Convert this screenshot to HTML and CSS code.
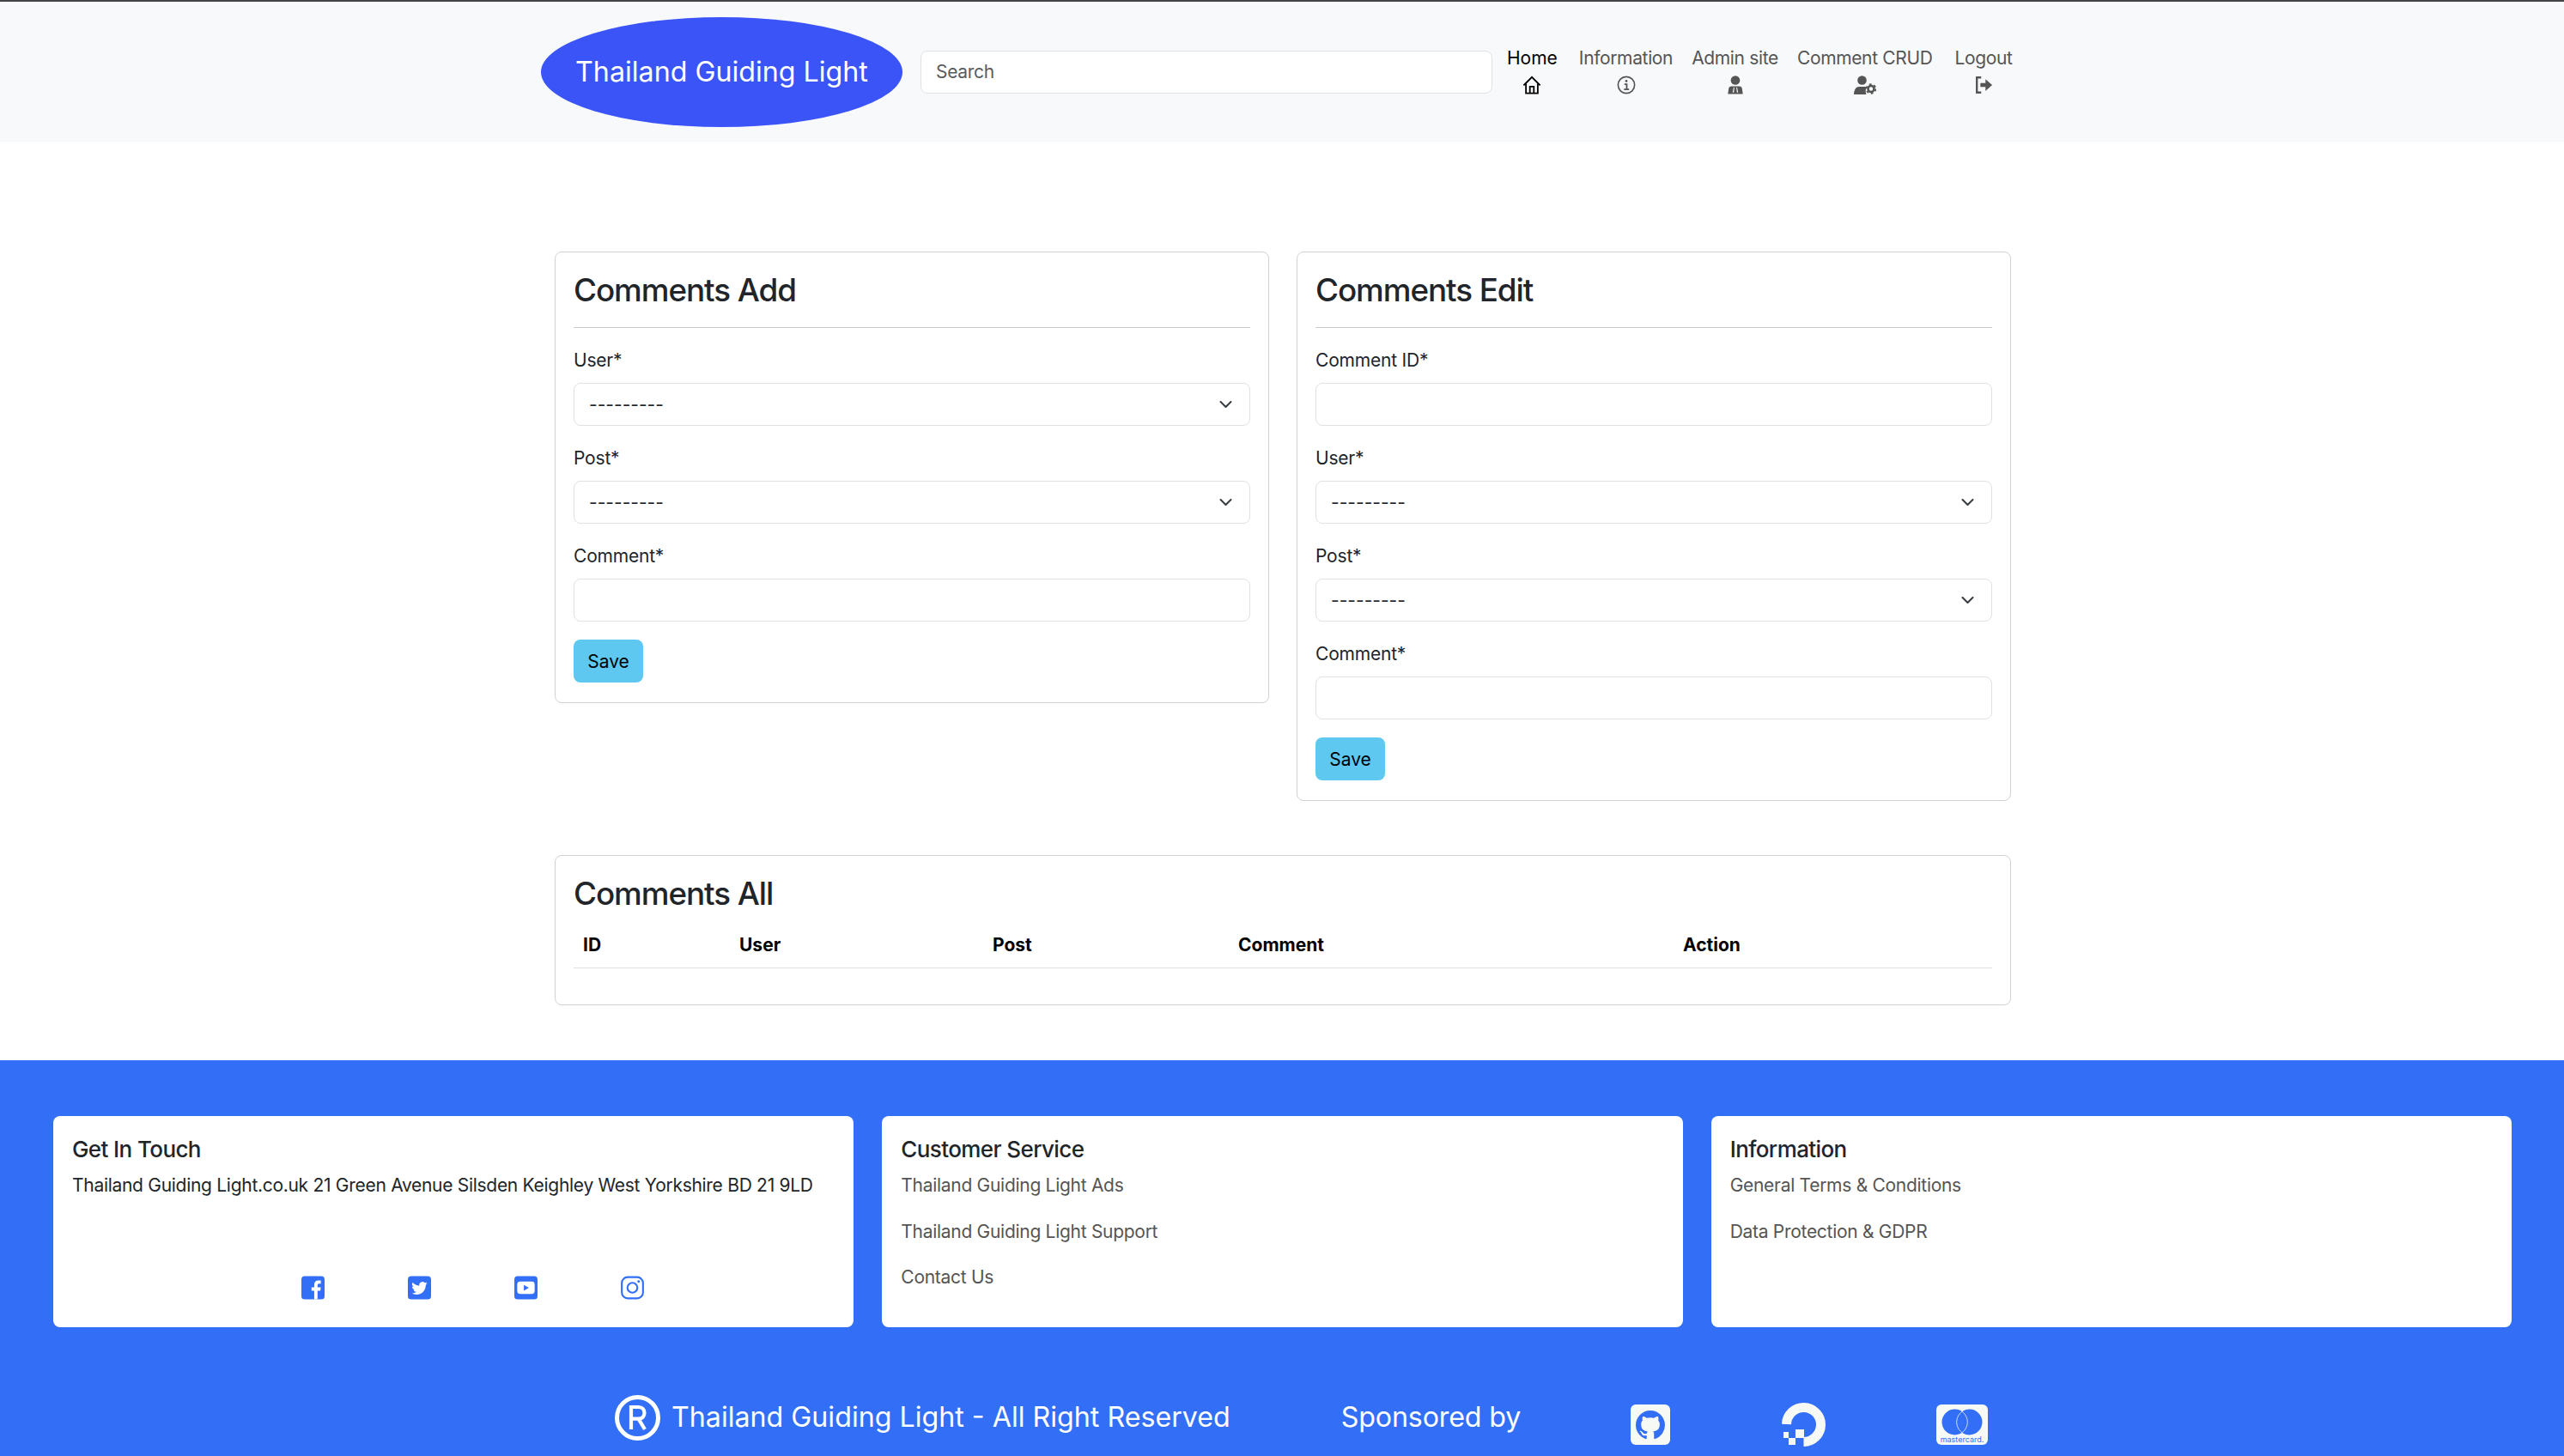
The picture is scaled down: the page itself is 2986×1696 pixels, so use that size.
FILE: index.html
```html
<!DOCTYPE html>
<html lang="en">
<head>
  <meta charset="utf-8">
  <title>Thailand Guiding Light</title>
  <link rel="stylesheet" href="styles.css">
</head>
<body>
  <header class="top_bar">
    <div class="top_inner">
      <a class="logo">Thailand Guiding Light</a>
      <input class="field search" type="text" placeholder="Search">
      <nav class="nav_links">
        <a class="nav_link active">Home
          <svg class="nav_icon" viewBox="0 0 24 24" fill="none" stroke="currentColor" stroke-width="2"><path d="M1.5 12.5 12 2l10.500 10.500"/><path d="M4.500 10v12.500h15V10"/><path d="M9.500 22.500V14h5v8.500"/></svg>
        </a>
        <a class="nav_link">Information
          <svg class="nav_icon" viewBox="0 0 24 24" fill="none" stroke="currentColor"><circle cx="12" cy="12" r="10.500" stroke-width="1.800"/><circle cx="12" cy="7" r="1.500" fill="currentColor" stroke="none"/><path stroke-width="2" d="M9.500 11H12.500V17.500M9 17.500H15.500"/></svg>
        </a>
        <a class="nav_link">Admin site
          <svg class="nav_icon" viewBox="0 0 24 24" fill="currentColor"><circle cx="12" cy="6" r="5.800"/><path fill-rule="evenodd" d="M2.500 23.500l1-7c.3-2 1.500-3 3.500-3h10c2 0 3.200 1 3.500 3l1 7ZM9.800 15l-1.300 6.500h1.500l.8-6.500Zm4.400 0h-1l.8 6.500h1.500Z"/></svg>
        </a>
        <a class="nav_link">Comment CRUD
          <svg class="nav_icon wide" viewBox="0 0 26 22" fill="currentColor"><circle cx="9.500" cy="5.500" r="5.300"/><path d="M0 22c.3-5 2-9 6-9h7c1 0 2 .2 2.500.5-1.500 1.500-2.500 4-1 8.500Z"/><g fill="none" stroke="currentColor"><circle cx="20" cy="15.500" r="3.500" stroke-width="2.600"/><circle cx="20" cy="15.500" r="5.400" stroke-width="1.800" stroke-dasharray="2.800 2.850"/></g></svg>
        </a>
        <a class="nav_link">Logout
          <svg class="nav_icon" viewBox="0 0 24 24" fill="none" stroke="currentColor" stroke-width="2.600"><path d="M9 2.500H3.500v19H9"/><path fill="currentColor" stroke="none" d="M8 9.500h6.500V4.500L23 12l-8.500 7.500v-5H8Z"/></svg>
        </a>
      </nav>
    </div>
  </header>

  <main class="page_main">
    <div class="form_row">
      <section class="card">
        <h3 class="card_title">Comments Add</h3>
        <hr class="title_rule">
        <div class="form_group">
          <label class="form_label">User*</label>
          <select class="field select_field"><option>---------</option></select>
        </div>
        <div class="form_group">
          <label class="form_label">Post*</label>
          <select class="field select_field"><option>---------</option></select>
        </div>
        <div class="form_group">
          <label class="form_label">Comment*</label>
          <input class="field" type="text">
        </div>
        <button class="save_btn" type="button">Save</button>
      </section>

      <section class="card">
        <h3 class="card_title">Comments Edit</h3>
        <hr class="title_rule">
        <div class="form_group">
          <label class="form_label">Comment ID*</label>
          <input class="field" type="text">
        </div>
        <div class="form_group">
          <label class="form_label">User*</label>
          <select class="field select_field"><option>---------</option></select>
        </div>
        <div class="form_group">
          <label class="form_label">Post*</label>
          <select class="field select_field"><option>---------</option></select>
        </div>
        <div class="form_group">
          <label class="form_label">Comment*</label>
          <input class="field" type="text">
        </div>
        <button class="save_btn" type="button">Save</button>
      </section>
    </div>

    <section class="card all_card">
      <h3 class="card_title tight">Comments All</h3>
      <table class="comments_table">
        <thead>
          <tr>
            <th class="col_id">ID</th>
            <th class="col_user">User</th>
            <th class="col_post">Post</th>
            <th class="col_comment">Comment</th>
            <th>Action</th>
          </tr>
        </thead>
      </table>
    </section>
  </main>

  <footer class="page_footer">
    <div class="footer_cards">
      <div class="foot_card">
        <h5 class="foot_title">Get In Touch</h5>
        <p class="foot_text">Thailand Guiding Light.co.uk 21 Green Avenue Silsden Keighley West Yorkshire BD 21 9LD</p>
        <div class="social_row">
          <svg class="social_icon" viewBox="0 0 28 28"><rect width="28" height="28" rx="4" fill="#326ff6"/><path fill="#fff" d="M15.500 28V17.500h-3.300v-4h3.300v-3c0-3.400 2-5.200 5-5.200 1.400 0 2.600.1 3 .2v3.500h-2c-1.600 0-2 .8-2 2v2.500h3.900l-.5 4h-3.400V28Z"/></svg>
          <svg class="social_icon" viewBox="0 0 28 28"><rect width="28" height="28" rx="4" fill="#326ff6"/><g transform="translate(4.500 4.500) scale(1.190)"><path fill="#fff" d="M5.026 15c6.038 0 9.341-5.003 9.341-9.334 0-.14 0-.282-.006-.422A6.685 6.685 0 0 0 16 3.542a6.658 6.658 0 0 1-1.889.518 3.301 3.301 0 0 0 1.447-1.817 6.533 6.533 0 0 1-2.087.793A3.286 3.286 0 0 0 7.875 6.030a9.325 9.325 0 0 1-6.767-3.429 3.289 3.289 0 0 0 1.018 4.382A3.323 3.323 0 0 1 .64 6.575v.045a3.288 3.288 0 0 0 2.632 3.218 3.203 3.203 0 0 1-.865.115 3.230 3.230 0 0 1-.614-.057 3.283 3.283 0 0 0 3.067 2.277A6.588 6.588 0 0 1 .78 13.580a6.320 6.320 0 0 1-.78-.045A9.344 9.344 0 0 0 5.026 15z"/></g></svg>
          <svg class="social_icon" viewBox="0 0 28 28"><rect width="28" height="28" rx="4" fill="#326ff6"/><rect x="3.500" y="6.500" width="21" height="15" rx="3.500" fill="#fff"/><path fill="#326ff6" d="M11.500 10.500v7l6-3.500Z"/></svg>
          <svg class="social_icon" viewBox="0 0 28 28" fill="none" stroke="#326ff6" stroke-width="2.200"><rect x="1.200" y="1.200" width="25.600" height="25.600" rx="7"/><circle cx="14" cy="14" r="6"/><circle cx="21.500" cy="6.500" r="1.500" fill="#326ff6" stroke="none"/></svg>
        </div>
      </div>
      <div class="foot_card">
        <h5 class="foot_title">Customer Service</h5>
        <a class="foot_link">Thailand Guiding Light Ads</a>
        <a class="foot_link">Thailand Guiding Light Support</a>
        <a class="foot_link">Contact Us</a>
      </div>
      <div class="foot_card">
        <h5 class="foot_title">Information</h5>
        <a class="foot_link">General Terms &amp; Conditions</a>
        <a class="foot_link">Data Protection &amp; GDPR</a>
      </div>
    </div>

    <div class="bottom_row">
      <svg class="reg_mark" viewBox="0 0 53 53" fill="none" stroke="#fff"><circle cx="26.500" cy="26.500" r="24" stroke-width="5"/><path stroke-width="4.200" d="M19 40V14h8.500c4.500 0 7 2.800 7 6.800s-2.500 6.800-7 6.800H19M27.500 27.600 35 40"/></svg>
      <h4 class="bottom_text">Thailand Guiding Light - All Right Reserved</h4>
      <h4 class="bottom_text sponsor">Sponsored by</h4>
      <div class="sponsor_logos">
        <svg class="logo_github" viewBox="0 0 46 47"><rect width="46" height="47" rx="6" fill="#f7f9f5"/><g transform="translate(6 7) scale(2.125)"><path fill="#326ff6" d="M8 0C3.580 0 0 3.580 0 8c0 3.540 2.290 6.530 5.470 7.590.4.070.55-.17.55-.38 0-.19-.01-.82-.01-1.490-2.010.37-2.530-.49-2.690-.94-.09-.23-.48-.94-.82-1.130-.28-.15-.68-.52-.01-.53.630-.01 1.080.58 1.230.82.72 1.210 1.870.87 2.330.66.070-.52.28-.87.51-1.070-1.780-.2-3.640-.89-3.640-3.950 0-.87.31-1.590.82-2.150-.08-.2-.36-1.020.08-2.120 0 0 .67-.21 2.200.82.64-.18 1.320-.27 2-.27.68 0 1.360.09 2 .27 1.530-1.040 2.200-.82 2.200-.82.44 1.100.16 1.920.08 2.120.51.56.82 1.270.82 2.150 0 3.070-1.870 3.750-3.650 3.950.29.25.54.73.54 1.480 0 1.070-.01 1.930-.01 2.200 0 .21.15.46.55.38A8.012 8.012 0 0 0 16 8c0-4.420-3.580-8-8-8z"/></g></svg>
        <svg class="logo_ocean" viewBox="0 0 51 52"><path fill="none" stroke="#f7f9f5" stroke-width="11" d="M5.500 26A20 20 0 1 1 25.500 46.500"/><path fill="#f7f9f5" d="M16 32h10v10H16ZM8 42h8v8H8ZM2 35h6v7H2Z"/></svg>
        <svg class="logo_card" viewBox="0 0 60 47"><rect width="60" height="47" rx="6" fill="#f7f9f5"/><circle cx="21.500" cy="20.500" r="15" fill="#326ff6"/><circle cx="38.500" cy="20.500" r="15" fill="#326ff6"/><path fill="none" stroke="#f7f9f5" stroke-width=".8" d="M30 8.200c-8.400 6.500-8.400 18.100 0 24.600 8.400-6.500 8.400-18.100 0-24.600Z"/><text class="card_word" x="30" y="43.500" text-anchor="middle">mastercard.</text></svg>
      </div>
    </div>
  </footer>
</body>
</html>
```

FILE: styles.css
```css
html, body {
  margin: 0;
  padding: 0;
  overflow-x: hidden;
}
body {
  font-family: "Inter", "Liberation Sans", sans-serif;
  font-size: 21px;
  line-height: 1.5;
  color: #212529;
  background: #fff;
}

/* top bar */
.top_bar {
  background: #f8f9fa;
  border-top: 2px solid #444;
  height: 163px;
  display: flex;
  align-items: center;
  justify-content: center;
}
.top_inner {
  width: 1726px;
  display: flex;
  align-items: center;
}
.logo {
  width: 421px;
  height: 126px;
  padding-top: 2px;
  flex: none;
  border-radius: 50%;
  background: #3a54f8;
  color: #fff;
  font-size: 32.200px;
  display: flex;
  align-items: center;
  justify-content: center;
}
.nav_links {
  display: flex;
  margin-bottom: 5px;
  letter-spacing: -0.35px;
}
.nav_link {
  display: flex;
  flex-direction: column;
  align-items: center;
  padding: 0 11px;
  color: #555;
  white-space: nowrap;
}
.nav_link.active {
  color: #000;
  margin-right: 3px;
  letter-spacing: 0;
}
.nav_link:last-child { margin-left: 4px; }
.nav_icon {
  width: 22px;
  height: 22px;
  margin-top: 4px;
}
.nav_icon.wide { width: 26px; }

/* form cards */
.page_main {
  width: 1696px;
  margin: 0 644px 0 646px;
  padding: 128px 0 64px;
}
.form_row {
  display: grid;
  grid-template-columns: 1fr 1fr;
  gap: 32px;
  align-items: start;
  margin-bottom: 63px;
}
.card {
  border: 1px solid #d2d2d2;
  border-radius: 8px;
  padding: 22px 21px;
}
.card_title {
  margin: 0 0 21px;
  font-size: 36.800px;
  font-weight: 500;
  line-height: 44px;
  letter-spacing: -1.05px;
}
.card_title.tight { margin-bottom: 11px; }
.title_rule {
  border: 0;
  border-top: 1px solid #c8c8c8;
  margin: 0 0 22px;
}
.form_group { margin-bottom: 22px; }
.form_group:last-of-type { margin-bottom: 21px; }
.form_label {
  display: block;
  margin-bottom: 11px;
  line-height: 31px;
  letter-spacing: -0.2px;
}
.field {
  display: block;
  box-sizing: border-box;
  width: 100%;
  height: 50px;
  padding: 0 17px;
  font-family: inherit;
  font-size: 21px;
  color: #212529;
  background-color: #fff;
  border: 1px solid #dee2e6;
  border-radius: 8px;
  outline: none;
}
.search {
  width: 666px;
  margin-left: 21px;
  margin-right: 6px;
  flex: none;
  letter-spacing: -0.3px;
}
.search::placeholder { color: #595c5f; opacity: 1; }
.select_field {
  appearance: none;
  background-image: url("data:image/svg+xml,%3csvg xmlns='http://www.w3.org/2000/svg' viewBox='0 0 16 16'%3e%3cpath fill='none' stroke='%23343a40' stroke-linecap='round' stroke-linejoin='round' stroke-width='2' d='M2 5l6 6 6-6'/%3e%3c/svg%3e");
  background-repeat: no-repeat;
  background-position: right 17px center;
  background-size: 21px 16px;
}
.save_btn {
  display: block;
  width: 81px;
  height: 50px;
  padding: 0;
  margin-bottom: 1px;
  font-family: inherit;
  font-size: 21px;
  color: #000;
  background: #5ec8f0;
  border: 0;
  border-radius: 8px;
}

/* comments table */
.comments_table {
  width: 100%;
  border-collapse: collapse;
  margin-bottom: 20px;
}
.comments_table th {
  padding: 11px;
  line-height: 31px;
  text-align: left;
  color: #000;
  font-weight: 700;
  border-bottom: 1px solid #dee2e6;
}
.col_id { width: 160px; }
.col_user { width: 273px; }
.col_post { width: 264px; }
.col_comment { width: 496px; }

/* footer */
.page_footer {
  background: #326ff6;
  height: 461px;
  padding-top: 65px;
  box-sizing: border-box;
}
.footer_cards {
  display: grid;
  grid-template-columns: repeat(3, 1fr);
  gap: 33px;
  padding: 0 61px 0 62px;
}
.foot_card {
  background: #fff;
  border-radius: 8px;
  height: 246px;
  box-sizing: border-box;
  padding: 23px 22px 32px;
  display: flex;
  flex-direction: column;
}
.foot_title {
  margin: 0 0 11px;
  font-size: 26px;
  font-weight: 500;
  line-height: 31px;
  letter-spacing: -0.6px;
}
.foot_text {
  margin: 0;
  letter-spacing: -0.29px;
}
.foot_link {
  color: #555;
  margin-bottom: 22px;
  letter-spacing: -0.29px;
}
.social_row {
  margin-top: auto;
  padding-left: 267px;
  display: flex;
  gap: 97px;
}
.social_icon {
  width: 27px;
  height: 28px;
  flex: none;
}
.bottom_row {
  display: flex;
  align-items: flex-start;
  padding-left: 716px;
  margin-top: 79px;
  color: #fff;
}
.reg_mark {
  width: 53px;
  height: 53px;
  flex: none;
  margin-right: 13px;
}
.bottom_text {
  margin: 7px 0 0;
  font-size: 32.200px;
  font-weight: 400;
  line-height: 38px;
  white-space: nowrap;
}
.sponsor {
  margin-left: 129px;
  letter-spacing: -0.15px;
}
.sponsor_logos {
  display: flex;
  align-items: center;
  margin-left: 128px;
  margin-top: 8px;
}
.logo_github { width: 46px; height: 47px; flex: none; }
.logo_ocean { width: 51px; height: 52px; flex: none; margin: 0 129px 0 130px; }
.logo_card { width: 60px; height: 47px; flex: none; }
.card_word {
  font-family: "Inter", sans-serif;
  font-size: 9px;
  fill: #326ff6;
}
```
